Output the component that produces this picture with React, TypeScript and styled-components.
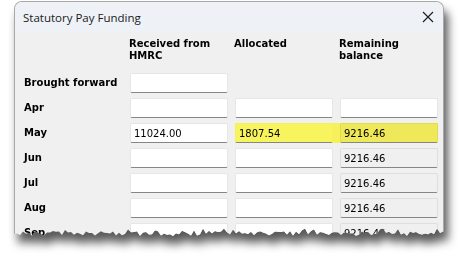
import React from 'react';
import styled, { createGlobalStyle } from 'styled-components';

const GlobalStyle = createGlobalStyle`
  html, body {
    margin: 0;
    padding: 0;
    background: #ffffff;
  }
  body {
    width: 460px;
    height: 263px;
    overflow: hidden;
    font-family: "DejaVu Sans", Verdana, sans-serif;
  }
`;

// jagged torn-paper bottom edge, generated once
const tornEdge = (() => {
  let seed = 7;
  const rnd = () => {
    seed = (seed * 9301 + 49297) % 233280;
    return seed / 233280;
  };
  const pts: string[] = ['0 0', '100% 0'];
  const width = 432;
  const base = 230;
  for (let x = width; x >= 0; x -= 3) {
    const y = base + rnd() * 5 - (rnd() > 0.85 ? 3 : 0);
    pts.push(`${x}px ${y.toFixed(1)}px`);
  }
  return `polygon(${pts.join(', ')})`;
})();

const Page = styled.div`
  padding: 1px 0 0 14px;
`;

const Shadow = styled.div`
  width: 431px;
  filter: drop-shadow(4px 9px 5px rgba(0, 0, 0, 0.65));
`;

const Window = styled.div`
  width: 428px;
  height: 240px;
  background: #f0f0f0;
  border: 1px solid #a9a9a9;
  border-bottom: none;
  border-radius: 8px 8px 0 0;
  overflow: hidden;
  clip-path: ${tornEdge};
`;

const TitleBar = styled.div`
  height: 30px;
  display: flex;
  align-items: center;
  justify-content: space-between;
  padding: 0 7px 0 8px;
  background: #eef2f7;
  font-family: "Open Sans", "Noto Sans", sans-serif;
  font-size: 11.5px;
  color: #1a1a1a;
`;

const CloseButton = styled.span`
  display: flex;
  width: 16px;
  height: 16px;
  align-items: center;
  justify-content: center;
`;

const Body = styled.div`
  padding: 6px 0 0 9px;
`;

const Grid = styled.div`
  display: grid;
  grid-template-columns: 99px 98px 98px 98px;
  column-gap: 7px;
  row-gap: 5px;
  align-items: center;
`;

const Header = styled.div`
  font-weight: bold;
  font-size: 10px;
  line-height: 12px;
  color: #000;
  height: 30px;
  margin-left: -1px;
  align-self: start;
`;

const Label = styled.div`
  font-weight: bold;
  font-size: 10px;
  color: #000;
  margin-top: -1px;
`;

const Box = styled.div<{ $tone?: 'white' | 'readonly' | 'yellow' | 'yellowDark' }>`
  box-sizing: border-box;
  height: 20px;
  padding: 0 3px;
  display: flex;
  align-items: center;
  font-size: 10px;
  color: #000;
  border: 1px solid
    ${({ $tone }) =>
      $tone === 'readonly' ? '#dedede' : $tone === 'yellowDark' ? '#e2dc4c' : $tone === 'yellow' ? '#f5f05c' : '#e6e6e6'};
  border-bottom: 1px solid #868686;
  border-radius: 2px;
  background: ${({ $tone }) =>
    $tone === 'readonly' ? '#f0f0f0' : $tone === 'yellow' ? '#f8f45e' : $tone === 'yellowDark' ? '#efe95a' : '#ffffff'};
`;

const HighlightBand = styled.div`
  grid-column: 3 / span 2;
  display: grid;
  grid-template-columns: 98px 98px;
  column-gap: 7px;
  background: #f5f05c;
`;

const Empty = styled.div``;

type Row = { label: string; received?: string; allocated?: string; remaining?: string; kind: 'first' | 'open' | 'highlight' | 'readonly' };

const rows: Row[] = [
  { label: 'Brought forward', kind: 'first' },
  { label: 'Apr', kind: 'open' },
  { label: 'May', received: '11024.00', allocated: '1807.54', remaining: '9216.46', kind: 'highlight' },
  { label: 'Jun', remaining: '9216.46', kind: 'readonly' },
  { label: 'Jul', remaining: '9216.46', kind: 'readonly' },
  { label: 'Aug', remaining: '9216.46', kind: 'readonly' },
  { label: 'Sep', remaining: '9216.46', kind: 'readonly' },
];

const CloseIcon = () => (
  <svg width="12" height="12" viewBox="0 0 12 12">
    <path d="M1 1 L11 11 M11 1 L1 11" stroke="#1a1a1a" strokeWidth="1.1" fill="none" />
  </svg>
);

const App: React.FC = () => {
  return (
    <>
      <GlobalStyle />
      <Page>
        <Shadow>
          <Window>
            <TitleBar>
              <span>Statutory Pay Funding</span>
              <CloseButton>
                <CloseIcon />
              </CloseButton>
            </TitleBar>
            <Body>
              <Grid>
                <Empty />
                <Header>Received from<br />HMRC</Header>
                <Header>Allocated</Header>
                <Header>Remaining<br />balance</Header>
                {rows.map(row => (
                  <React.Fragment key={row.label}>
                    <Label>{row.label}</Label>
                    <Box>{row.received}</Box>
                    {row.kind === 'first' && (
                      <>
                        <Empty />
                        <Empty />
                      </>
                    )}
                    {row.kind === 'open' && (
                      <>
                        <Box />
                        <Box />
                      </>
                    )}
                    {row.kind === 'highlight' && (
                      <HighlightBand>
                        <Box $tone="yellow">{row.allocated}</Box>
                        <Box $tone="yellowDark">{row.remaining}</Box>
                      </HighlightBand>
                    )}
                    {row.kind === 'readonly' && (
                      <>
                        <Box />
                        <Box $tone="readonly">{row.remaining}</Box>
                      </>
                    )}
                  </React.Fragment>
                ))}
              </Grid>
            </Body>
          </Window>
        </Shadow>
      </Page>
    </>
  );
};

export default App;
